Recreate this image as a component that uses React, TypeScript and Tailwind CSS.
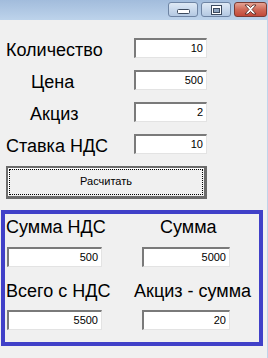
import React from "react";

const font = { fontFamily: '"Liberation Sans", Arial, sans-serif' };

function Field({ value, className }: { value: string; className: string }) {
  return (
    <div
      className={`h-[20px] bg-white border-t-2 border-l-2 border-t-[#7a7a7a] border-l-[#7a7a7a] border-b border-r border-b-[#e3e3e3] border-r-[#e3e3e3] flex items-center justify-end pr-[3px] pb-[1px] text-[11px] text-black ${className}`}
    >
      {value}
    </div>
  );
}

function TitleButtons() {
  return (
    <div className="flex gap-[3px] pt-[2px]">
      <div className="w-[30px] h-[15px] rounded-[3px] border border-[#6e84a3] bg-gradient-to-b from-[#dfe9f5] via-[#c9d9ec] to-[#b4c9e2] flex items-end justify-center pb-[2px]">
        <svg width="13" height="5" viewBox="0 0 13 5">
          <rect x="0.5" y="0.5" width="12" height="4" rx="1" fill="#fff" stroke="#3c4a5e" />
        </svg>
      </div>
      <div className="w-[30px] h-[15px] rounded-[3px] border border-[#6e84a3] bg-gradient-to-b from-[#dfe9f5] via-[#c9d9ec] to-[#b4c9e2] flex items-center justify-center">
        <svg width="11" height="10" viewBox="0 0 11 10">
          <rect x="0.5" y="0.5" width="10" height="9" fill="#fff" stroke="#3c4a5e" />
          <rect x="2.5" y="3.5" width="6" height="4" fill="#8ea4c0" stroke="#3c4a5e" />
        </svg>
      </div>
      <div className="w-[33px] h-[15px] rounded-[3px] border border-[#7a3b33] bg-gradient-to-b from-[#e4a294] via-[#d06a58] to-[#c2493a] flex items-center justify-center">
        <svg width="13" height="11" viewBox="0 0 13 11">
          <path
            d="M1 1 L4 1 L6.5 3.5 L9 1 L12 1 L8 5.5 L12 10 L9 10 L6.5 7.5 L4 10 L1 10 L5 5.5 Z"
            fill="#fff"
            stroke="#4a2420"
            strokeWidth="0.8"
            strokeLinejoin="round"
          />
        </svg>
      </div>
    </div>
  );
}

export default function App() {
  const rows = [
    { label: "Количество", pad: "pl-[6px]", value: "10" },
    { label: "Цена", pad: "pl-[31px]", value: "500" },
    { label: "Акциз", pad: "pl-[30px]", value: "2" },
    { label: "Ставка НДС", pad: "pl-[6px]", value: "10" },
  ];

  return (
    <div className="w-[268px] h-[358px] bg-[#f0f0f0] flex flex-col overflow-hidden text-black" style={font}>
      <div className="h-[20px] shrink-0 bg-gradient-to-b from-[#a2bcdc] to-[#bdd3eb] flex justify-end pr-[1px]">
        <TitleButtons />
      </div>

      <div className="flex-1 flex flex-col border-r border-[#bfd3ea]">
        <div className="grid grid-cols-[134px_73px] gap-y-[12px] pt-[18px]">
          {rows.map((r) => (
            <React.Fragment key={r.label}>
              <div className={`h-[20px] pt-[2px] text-[18px] leading-[20px] whitespace-nowrap ${r.pad}`}>{r.label}</div>
              <Field value={r.value} className="w-[73px]" />
            </React.Fragment>
          ))}
        </div>

        <button className="mt-[12px] ml-[6px] w-[201px] h-[33px] border-2 border-b-[3px] border-r-[3px] border-[#6b6b6b] bg-[#f0f0f0] p-[1px] shadow-[inset_1px_1px_0_#ffffff]">
          <span className="flex h-full w-full items-center justify-center border border-dotted border-black text-[11px] pb-[1px]">
            Расчитать
          </span>
        </button>

        <div className="mt-[11px] ml-[1px] w-[262px] h-[136px] border-4 border-[#4040c8]">
          <div className="grid grid-cols-[129px_1fr] pt-[3px]">
            <div className="ml-[1px] h-[20px] text-[18px] leading-[20px] whitespace-nowrap">Сумма НДС</div>
            <div className="ml-[26px] h-[20px] text-[18px] leading-[20px] whitespace-nowrap">Сумма</div>

            <div className="mt-[10px] ml-[2px]">
              <Field value="500" className="w-[95px]" />
            </div>
            <div className="mt-[10px] ml-[8px]">
              <Field value="5000" className="w-[88px]" />
            </div>

            <div className="mt-[14px] ml-[1px] h-[20px] text-[18px] leading-[20px] whitespace-nowrap">Всего с НДС</div>
            <div className="mt-[14px] h-[20px] text-[18px] leading-[20px] whitespace-nowrap">Акциз - сумма</div>

            <div className="mt-[9px] ml-[2px]">
              <Field value="5500" className="w-[95px]" />
            </div>
            <div className="mt-[9px] ml-[8px]">
              <Field value="20" className="w-[88px]" />
            </div>
          </div>
        </div>
      </div>
    </div>
  );
}
